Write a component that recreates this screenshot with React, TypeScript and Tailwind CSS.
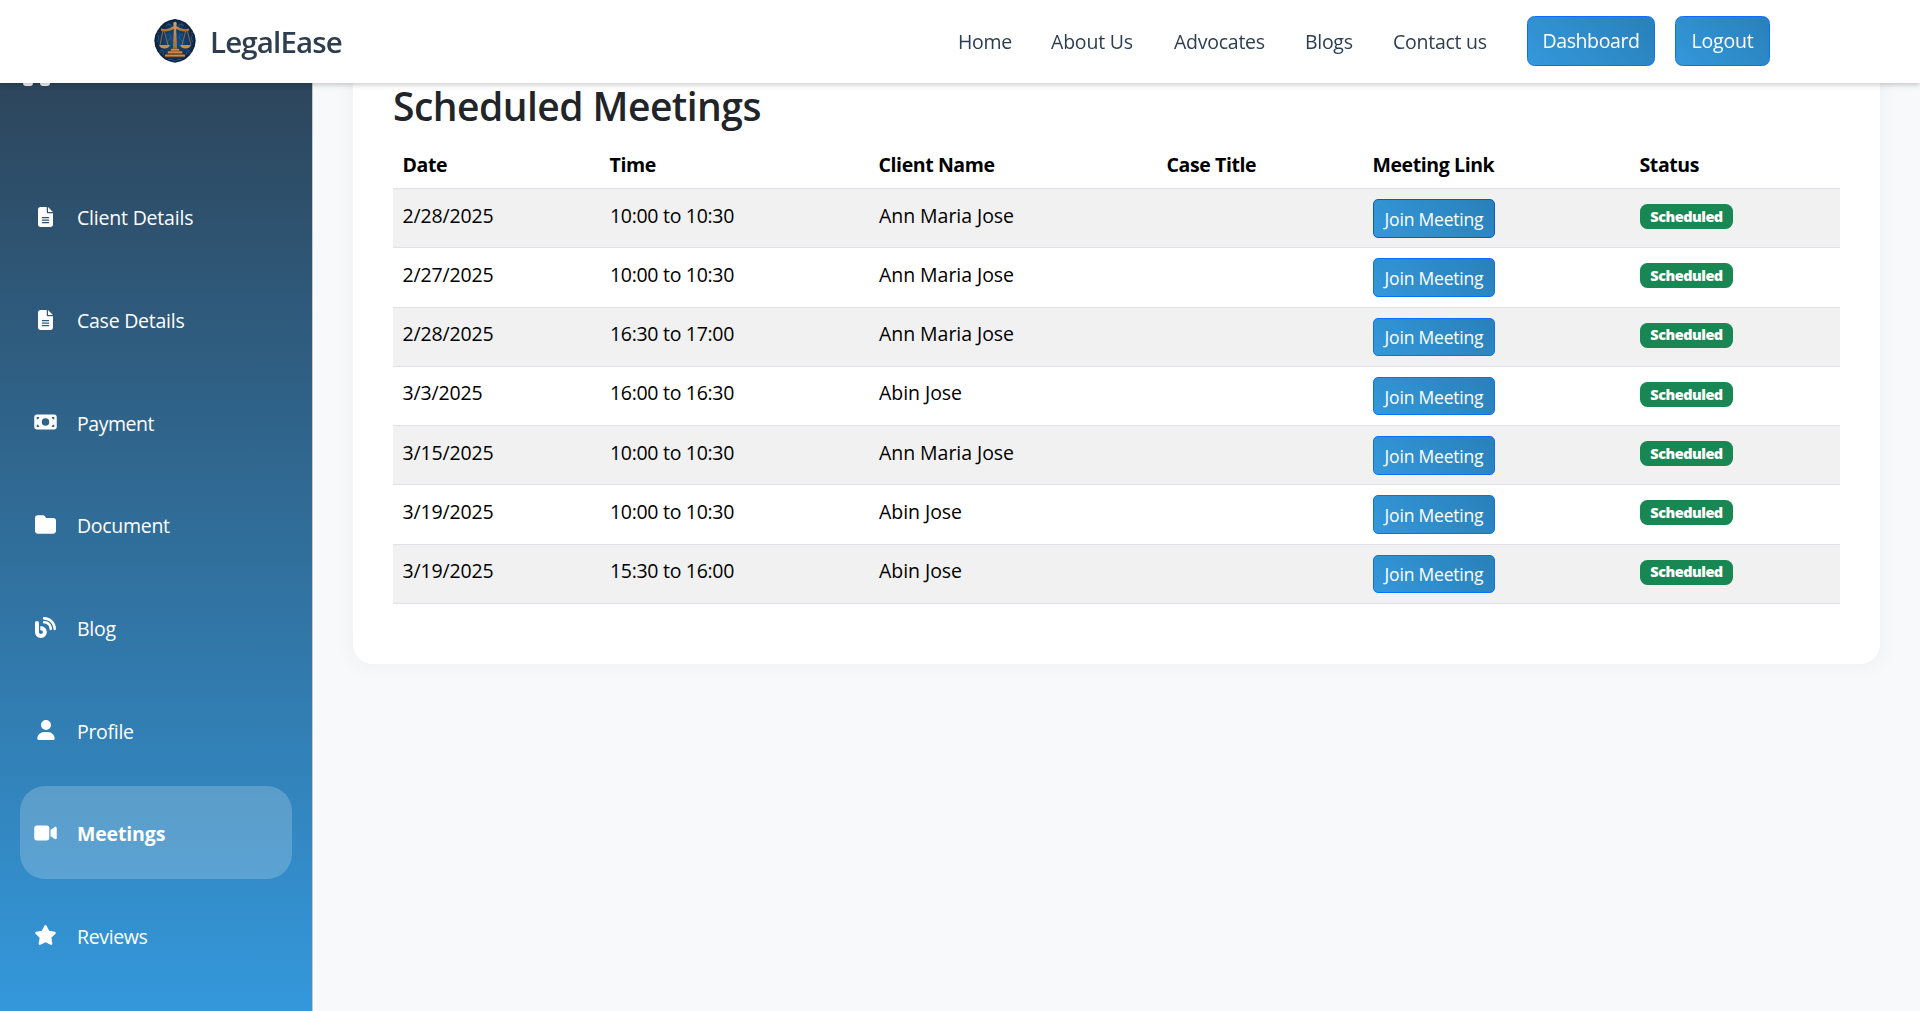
import {
  FaBlog,
  FaFileLines,
  FaFolder,
  FaMoneyBill,
  FaStar,
  FaUser,
  FaVideo,
} from 'react-icons/fa6';

const FONT = 'font-["Open_Sans","Noto_Sans",sans-serif]';

const navLinks = [
  { label: 'Home', cls: 'w-[53px] tracking-[-0.3px]' },
  { label: 'About Us', cls: 'w-[83px] tracking-[-0.2px]' },
  { label: 'Advocates', cls: 'w-[91px] tracking-[-0.25px]' },
  { label: 'Blogs', cls: 'w-[48px] tracking-[-0.3px]' },
  { label: 'Contact us', cls: 'w-[94px] tracking-[-0.25px]' },
];

const menu = [
  { label: 'Client Details', Icon: FaFileLines, icon: 'h-5 w-[15px]', text: 'tracking-[-0.2px]' },
  { label: 'Case Details', Icon: FaFileLines, icon: 'h-5 w-[15px]', text: 'tracking-[-0.25px]' },
  { label: 'Payment', Icon: FaMoneyBill, icon: 'h-5 w-[23px]', text: 'tracking-[-0.45px]' },
  { label: 'Document', Icon: FaFolder, icon: 'h-[21px] w-[21px]', text: 'tracking-[-0.3px]' },
  { label: 'Blog', Icon: FaBlog, icon: 'h-[21px] w-[21px]', text: 'tracking-[-0.25px]' },
  { label: 'Profile', Icon: FaUser, icon: 'h-5 w-[18px]', text: 'tracking-[-0.3px]' },
  { label: 'Meetings', Icon: FaVideo, icon: 'h-5 w-[23px]', text: 'font-bold tracking-[-0.15px]', active: true },
  { label: 'Reviews', Icon: FaStar, icon: 'h-5 w-[23px]', text: 'tracking-[-0.35px]' },
];

const meetings = [
  ['2/28/2025', '10:00 to 10:30', 'Ann Maria Jose'],
  ['2/27/2025', '10:00 to 10:30', 'Ann Maria Jose'],
  ['2/28/2025', '16:30 to 17:00', 'Ann Maria Jose'],
  ['3/3/2025', '16:00 to 16:30', 'Abin Jose'],
  ['3/15/2025', '10:00 to 10:30', 'Ann Maria Jose'],
  ['3/19/2025', '10:00 to 10:30', 'Abin Jose'],
  ['3/19/2025', '15:30 to 16:00', 'Abin Jose'],
];

const COLS = 'grid grid-cols-[207px_269px_288px_206px_267px_1fr]';

function Logo() {
  return (
    <svg width="42" height="44" viewBox="0 0 42 44" className="shrink-0">
      <defs>
        <radialGradient id="disc">
          <stop offset="0" stopColor="#174f86" />
          <stop offset="0.7" stopColor="#12365f" />
          <stop offset="1" stopColor="#0c1f3b" />
        </radialGradient>
        <linearGradient id="gold" x1="0" y1="0" x2="0" y2="1">
          <stop offset="0" stopColor="#d9a163" />
          <stop offset="1" stopColor="#a8682e" />
        </linearGradient>
      </defs>
      <path
        d="M21 0l5.500 1.200 5 2.300 3.800 3.500 3.200 4.500 2.300 4.500.9 5.500-.9 6-2.300 5-3.200 4.300-4 3.500-4.300 2-6 1.400-6-1.400-4.300-2-4-3.500-3.200-4.300-2.300-5-.9-6 .9-5.500 2.300-4.500L6.700 7l3.800-3.500 5-2.300z"
        fill="url(#disc)"
      />
      <g fill="none" stroke="#2672ac" strokeWidth="0.9" opacity="0.75">
        <path d="M12 7c2-3 6-2 5 1M30 7c-2-3-6-2-5 1M3 16c2 1 2 5 0 7M39 16c-2 1-2 5 0 7M13 16c4-2 5 3 2 5s-2 5 2 6M29 16c-4-2-5 3-2 5s2 5-2 6" />
        <path d="M6 32c3-2 4 1 3 4M36 32c-3-2-4 1-3 4M14 41c3-2 5 1 7 1s4-3 7-1" />
      </g>
      <g fill="none" stroke="#7c5a3c" strokeWidth="0.7" opacity="0.7">
        <path d="M3 13l2 1M39 13l-2 1M14 4l1 2M28 4l-1 2M5 33l3 1M37 33l-3 1" />
      </g>
      <path d="M9 11L6 26M10 11l4 15M32 11l-4 15M33 11l4 15" stroke="#a87542" strokeWidth="0.8" fill="none" />
      <path d="M7 9.500c6 2 10-1 14-3 4 2 8 5 14 3v2.200c-6 2-10-.5-14-2.200-4 1.700-8 4.200-14 2.200z" fill="url(#gold)" />
      <path d="M19.300 4.500a1.700 1.700 0 0 1 3.400 0l-.6 5 1 20.500h-4.200L19.900 9.500z" fill="url(#gold)" />
      <path d="M5 26h11c-1 2.500-2.500 3.500-5.500 3.500S6 28.500 5 26zM26 26h11c-1 2.500-2.500 3.500-5.500 3.500S27 28.500 26 26z" fill="#c98c4a" />
      <path d="M17.500 29.500h7L26 32h2.500v3H31v3.300H11V35h2.500v-3H16z" fill="#875228" />
      <path d="M17 30h8v1.500h-8zM14 32.500h14V34H14zM11 36h20v1.300H11z" fill="#cb8b4a" />
    </svg>
  );
}

function Header() {
  return (
    <header className="fixed inset-x-0 top-0 z-20 flex h-[83px] items-center justify-between bg-white pl-[154px] pr-[150px] shadow-[0_2px_5px_rgba(0,0,0,0.2)]">
      <div className="flex items-center gap-[14px] pb-[2px]">
        <Logo />
        <span className="pt-[3px] text-[29.500px] font-semibold leading-[40px] tracking-[-0.850px] text-[#2c3e50]">
          LegalEase
        </span>
      </div>
      <nav className="flex items-center gap-5 pb-px">
        <div className="mr-5 flex gap-10 pt-px">
          {navLinks.map((l) => (
            <a key={l.label} className={`${l.cls} whitespace-nowrap text-[19.500px] leading-[30px] text-[#2c3e50]`}>
              {l.label}
            </a>
          ))}
        </div>
        <button className="h-[50px] w-[128px] rounded-[7.500px] border border-[#0d6efd] bg-[linear-gradient(45deg,#3498db,#2980b9)] text-[19.500px] tracking-[-0.400px] text-white">
          Dashboard
        </button>
        <button className="h-[50px] w-[95px] rounded-[7.500px] border border-[#0d6efd] bg-[linear-gradient(45deg,#3498db,#2980b9)] text-[19.500px] tracking-[-0.200px] text-white">
          Logout
        </button>
      </nav>
    </header>
  );
}

function Sidebar() {
  return (
    <aside className="flex h-[1011px] w-[313px] shrink-0 flex-col border-r border-[#c4c8cc] bg-[linear-gradient(180deg,#2c3e50,#3498db)] px-5 text-white">
      <div className="flex h-[170.500px] shrink-0 pl-[3px] pt-[60px]">
        <div className="flex h-[26px] gap-[7px]">
          <span className="w-[10px] rounded-[3px] bg-[#f3f3f3]" />
          <span className="w-[10px] rounded-[3px] bg-[#f3f3f3]" />
        </div>
      </div>
      <ul className="flex flex-col gap-[9.630px]">
        {menu.map(({ label, Icon, icon, text, active }) => (
          <li
            key={label}
            className={`flex h-[93px] w-[272px] shrink-0 items-center rounded-[25px] pl-[13.500px] ${active ? 'bg-white/20' : ''}`}
          >
            <span className="flex w-6 shrink-0 justify-center">
              <Icon className={`shrink-0 ${icon}`} />
            </span>
            <span className={`ml-[19.500px] pt-[2px] text-[19.500px] ${text}`}>{label}</span>
          </li>
        ))}
      </ul>
    </aside>
  );
}

function Meetings() {
  return (
    <section className="mx-10 -mt-5 h-[684px] flex-1 rounded-[20px] bg-white px-10 pt-[100px] shadow-[0_0_25px_rgba(0,0,0,0.05)]">
      <h1 className="h-[60px] whitespace-nowrap text-[39px] font-semibold leading-[52px] tracking-[-0.530px] text-[#212529]">
        Scheduled Meetings
      </h1>
      <div className={`${COLS} h-[49px] border-b border-[#dee2e6] text-[19.500px] font-bold leading-[49px] tracking-[-0.400px] text-black`}>
        {['Date', 'Time', 'Client Name', 'Case Title', 'Meeting Link', 'Status'].map((h) => (
          <div key={h} className="pl-[9.500px]">
            {h}
          </div>
        ))}
      </div>
      {meetings.map(([date, time, client], i) => (
        <div
          key={i}
          className={`${COLS} h-[59.280px] border-b border-[#dee2e6] text-[19.500px] leading-[30px] text-black ${i % 2 === 0 ? 'bg-[#f1f1f1]' : 'bg-white'}`}
        >
          <div className="pl-[9.500px] pt-[11.500px] tracking-[-0.150px]">{date}</div>
          <div className="pl-[10px] pt-[11.500px] tracking-[-0.300px]">{time}</div>
          <div className="pl-[10px] pt-[11.500px] tracking-[-0.050px]">{client}</div>
          <div />
          <div className="pl-[10px] pt-[10px]">
            <button
              className={`flex h-[38.500px] w-[122px] items-center justify-center rounded-[5px] border bg-[linear-gradient(45deg,#3498db,#2980b9)] pt-px text-[17.500px] tracking-[-0.200px] text-white ${i === 0 ? 'border-[#0a58ca]' : 'border-[#0d6efd]'}`}
            >
              Join Meeting
            </button>
          </div>
          <div className="pl-[10px] pt-[15px]">
            <span className="flex h-[25px] w-[93px] items-center justify-center rounded-[7.500px] bg-[#198754] pt-px text-[14.500px] font-extrabold leading-none tracking-[-0.500px] text-white">
              Scheduled
            </span>
          </div>
        </div>
      ))}
    </section>
  );
}

export default function App() {
  return (
    <div className={`${FONT} h-[1011px] overflow-hidden bg-[#f8f9fb]`}>
      <Header />
      <main className="flex items-start">
        <Sidebar />
        <Meetings />
      </main>
    </div>
  );
}
